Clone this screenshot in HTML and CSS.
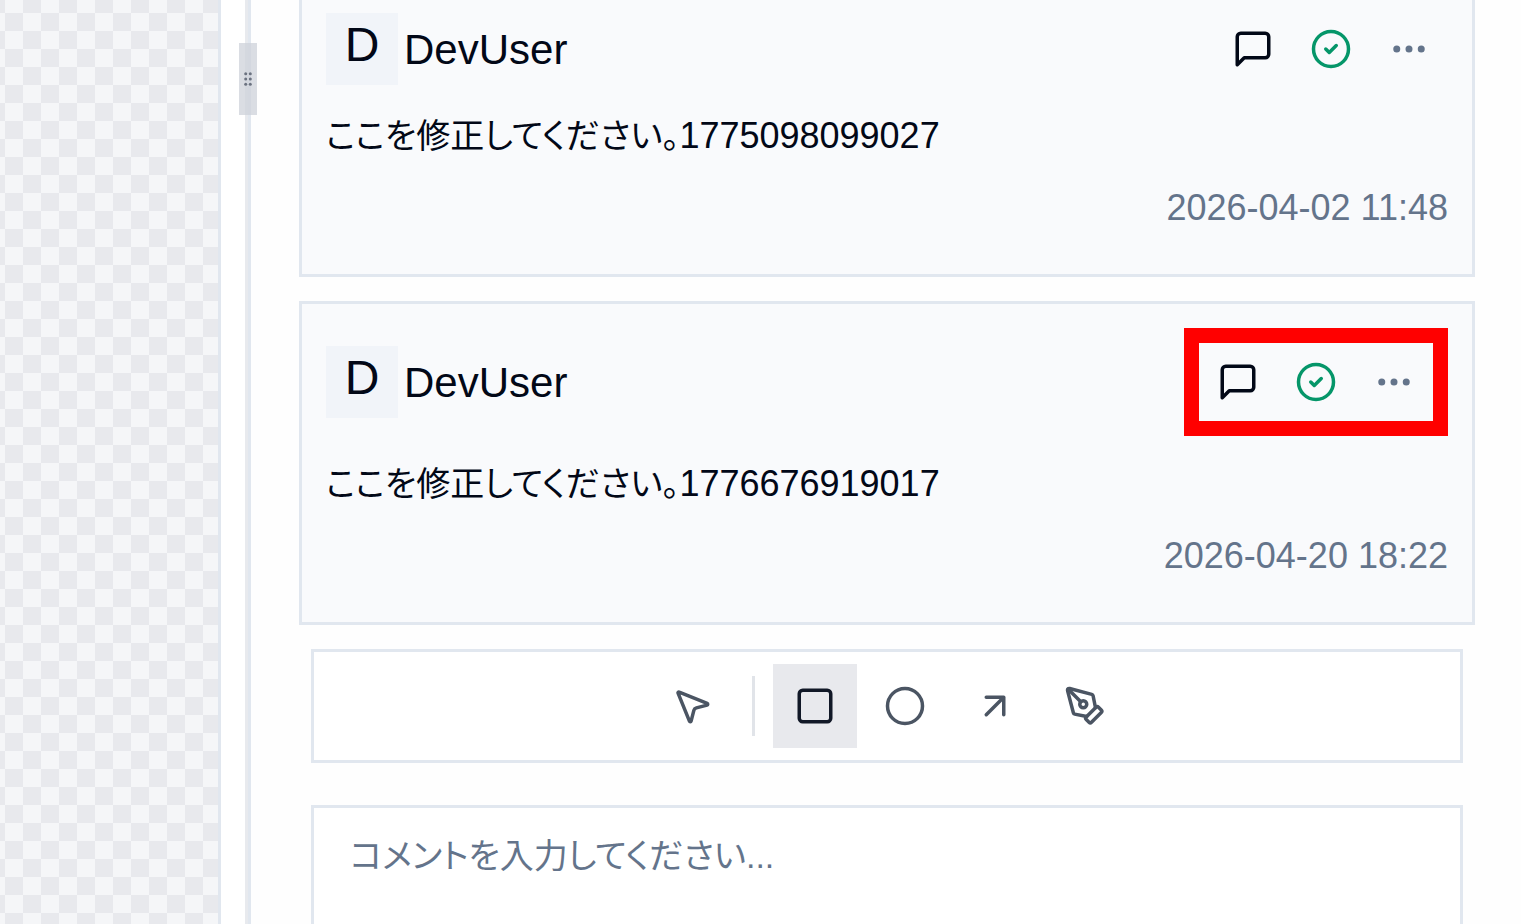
FILE: index.html
```html
<!DOCTYPE html>
<html lang="ja">
<head>
<meta charset="utf-8">
<title>コメント</title>
<meta name="viewport" content="width=device-width, initial-scale=1">
<link rel="stylesheet" href="styles.css">
</head>
<body>
<svg class="sprite">
  <symbol id="i-message" viewBox="0 0 24 24"><path d="M21 15a2 2 0 0 1-2 2H7l-4 4V5a2 2 0 0 1 2-2h14a2 2 0 0 1 2 2z"/></symbol>
  <symbol id="i-check" viewBox="0 0 24 24"><circle cx="12" cy="12" r="10"/><path d="m9 12 2 2 4-4"/></symbol>
  <symbol id="i-more" viewBox="0 0 24 24"><circle cx="12" cy="12" r="1"/><circle cx="19" cy="12" r="1"/><circle cx="5" cy="12" r="1"/></symbol>
</svg>
<div class="app">
  <div class="canvas"></div>
  <div class="gutter">
    <button class="handle" type="button" aria-label="幅を変更">
      <svg class="grip" viewBox="0 0 12 18"><circle cx="3.7" cy="3.7" r="1.5"/><circle cx="8.3" cy="3.7" r="1.5"/><circle cx="3.7" cy="9" r="1.5"/><circle cx="8.3" cy="9" r="1.5"/><circle cx="3.7" cy="14.3" r="1.5"/><circle cx="8.3" cy="14.3" r="1.5"/></svg>
    </button>
  </div>
  <main class="panel">
    <section class="comments">
      <article class="card">
        <header class="card-head">
          <span class="avatar">D</span>
          <span class="name">DevUser</span>
          <div class="actions">
            <button class="action" type="button" aria-label="返信"><svg class="icon"><use href="#i-message"/></svg></button>
            <button class="action action-done" type="button" aria-label="解決"><svg class="icon"><use href="#i-check"/></svg></button>
            <button class="action action-more" type="button" aria-label="その他"><svg class="icon"><use href="#i-more"/></svg></button>
          </div>
        </header>
        <p class="text"><span class="kana">ここを修正してください。</span>1775098099027</p>
        <time class="date">2026-04-02 11:48</time>
      </article>
      <article class="card">
        <header class="card-head">
          <span class="avatar">D</span>
          <span class="name">DevUser</span>
          <div class="actions actions-marked">
            <button class="action" type="button" aria-label="返信"><svg class="icon"><use href="#i-message"/></svg></button>
            <button class="action action-done" type="button" aria-label="解決"><svg class="icon"><use href="#i-check"/></svg></button>
            <button class="action action-more" type="button" aria-label="その他"><svg class="icon"><use href="#i-more"/></svg></button>
          </div>
        </header>
        <p class="text"><span class="kana">ここを修正してください。</span>1776676919017</p>
        <time class="date">2026-04-20 18:22</time>
      </article>
    </section>
    <section class="composer">
      <div class="toolbar" role="toolbar" aria-label="描画ツール">
        <button class="tool" type="button" aria-label="選択"><svg class="icon" viewBox="0 0 24 24"><path d="M4.037 4.688a.495.495 0 0 1 .651-.651l16 6.5a.5.5 0 0 1-.063.947l-6.124 1.58a2 2 0 0 0-1.438 1.435l-1.579 6.126a.5.5 0 0 1-.947.063z"/></svg></button>
        <span class="separator"></span>
        <button class="tool tool-active" type="button" aria-label="四角形" aria-pressed="true"><svg class="icon" viewBox="0 0 24 24"><rect x="3" y="3" width="18" height="18" rx="2"/></svg></button>
        <button class="tool" type="button" aria-label="円"><svg class="icon" viewBox="0 0 24 24"><circle cx="12" cy="12" r="10"/></svg></button>
        <button class="tool" type="button" aria-label="矢印"><svg class="icon" viewBox="0 0 24 24"><path d="M7 7h10v10M7 17 17 7"/></svg></button>
        <button class="tool" type="button" aria-label="ペン"><svg class="icon" viewBox="0 0 24 24"><path d="M15.707 21.293a1 1 0 0 1-1.414 0l-1.586-1.586a1 1 0 0 1 0-1.414l5.586-5.586a1 1 0 0 1 1.414 0l1.586 1.586a1 1 0 0 1 0 1.414z"/><path d="m18 13-1.375-6.874a1 1 0 0 0-.746-.776L3.235 2.028a1 1 0 0 0-1.207 1.207L5.35 15.879a1 1 0 0 0 .776.746L13 18"/><path d="m2.3 2.3 7.286 7.286"/><circle cx="11" cy="11" r="2"/></svg></button>
      </div>
      <textarea class="input" aria-label="コメント" placeholder="コメントを入力してください..."></textarea>
    </section>
  </main>
</div>
</body>
</html>
```
FILE: styles.css
```css
* {
  box-sizing: border-box;
}

body {
  margin: 0;
  color: #020817;
  background: #fff;
  font-family: "Liberation Sans", "Noto Sans CJK JP", sans-serif;
  font-size: 36px;
  line-height: 48px;
}

button {
  padding: 0;
  border: 0;
  color: inherit;
  background: transparent;
}

.sprite {
  display: none;
}

.app {
  display: flex;
  height: 100vh;
  overflow: hidden;
}

.canvas {
  flex: 0 0 221px;
  border-right: 3px solid #e1e7ef;
  background: repeating-conic-gradient(#f5f6f8 0 25%, #e8e9ed 0 50%) 5px 13px / 36px 36px;
  background-clip: padding-box;
}

.gutter {
  position: relative;
  flex: 0 0 27px;
  border-right: 3px solid #e8eaee;
}

.handle {
  position: absolute;
  z-index: 1;
  top: 43px;
  right: -12px;
  display: grid;
  place-items: center;
  width: 18px;
  height: 72px;
  background: rgb(205 209 217 / 75%);
}

.grip {
  width: 12px;
  height: 18px;
  fill: #6b7280;
}

.panel {
  display: flex;
  flex: 1;
  flex-direction: column;
  min-width: 0;
  padding: 0 46px 0 48px;
  border-left: 3px solid #e1e7ef;
  background: #fefefe;
}

.comments {
  display: flex;
  flex: 1;
  flex-direction: column;
  justify-content: flex-end;
  gap: 24px;
  min-height: 0;
}

.card {
  display: flex;
  flex: none;
  flex-direction: column;
  gap: 24px;
  padding: 24px 24px 42px;
  border: 3px solid #e1e7ef;
  background: #f9fafc;
}

.card-head {
  display: flex;
  align-items: center;
  gap: 6px;
}

.avatar {
  width: 72px;
  height: 72px;
  background: #f1f4f9;
  font-size: 48px;
  line-height: 64px;
  text-align: center;
}

.name {
  padding-top: 2px;
  font-size: 42px;
}

.actions {
  display: flex;
  margin-left: auto;
}

.actions-marked {
  border: 15px solid #f00;
}

.action {
  display: grid;
  place-items: center;
  width: 78px;
  height: 78px;
}

.action-done {
  color: #059669;
}

.action-more {
  color: #64748b;
}

.icon {
  width: 42px;
  height: 42px;
  fill: none;
  stroke: currentColor;
  stroke-width: 2;
  stroke-linecap: round;
  stroke-linejoin: round;
}

.text {
  margin: 0;
}

.kana {
  font-size: 34px;
  font-feature-settings: "palt";
  line-height: 1;
}

.date {
  align-self: flex-end;
  color: #64748b;
}

.composer {
  display: flex;
  flex: none;
  flex-direction: column;
  gap: 42px;
  padding: 24px 12px 0;
}

.toolbar {
  display: flex;
  align-items: center;
  justify-content: center;
  gap: 6px;
  padding: 12px 12px 12px 15px;
  border: 3px solid #e1e7ef;
  background: #fff;
}

.tool {
  display: grid;
  place-items: center;
  width: 84px;
  height: 84px;
  color: #4b5563;
}

.tool-active {
  color: #111827;
  background: #e8e9ed;
}

.separator {
  width: 3px;
  height: 60px;
  margin: 0 12px;
  background: #e1e4e9;
}

.input {
  display: block;
  width: 100%;
  height: 119px;
  padding: 24px 36px;
  border: 3px solid #e1e7ef;
  border-bottom: 0;
  border-radius: 0;
  background: #fff;
  color: inherit;
  font-family: inherit;
  font-size: 34px;
  font-feature-settings: "palt";
  line-height: 48px;
  resize: none;
}

.input::placeholder {
  color: #64748b;
  opacity: 1;
}
```
